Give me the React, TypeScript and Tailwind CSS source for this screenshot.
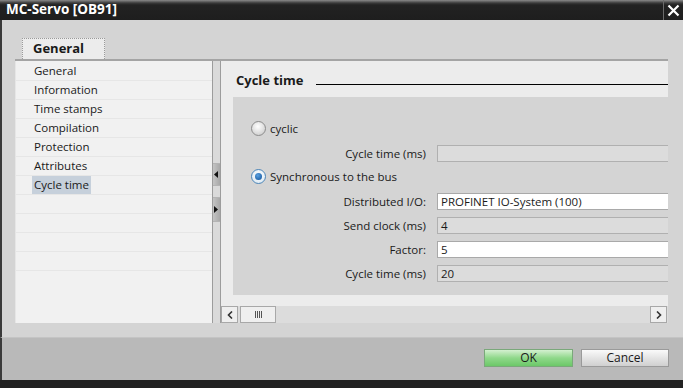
import React from "react";

const navItems = ["General", "Information", "Time stamps", "Compilation", "Protection", "Attributes", "Cycle time"];

function Radio({ checked }: { checked?: boolean }) {
  return (
    <span
      className={
        "flex h-[15px] w-[15px] shrink-0 items-center justify-center rounded-full border " +
        (checked
          ? "border-[#4d86b8] bg-[radial-gradient(circle_at_50%_40%,#ffffff,#d4e4f0)]"
          : "border-[#8c8c8c] bg-[radial-gradient(circle_at_45%_35%,#ffffff,#c4c4c4)]")
      }
    >
      {checked && (
        <span className="h-[7px] w-[7px] rounded-full bg-[radial-gradient(circle_at_40%_35%,#5aa0e0,#0b4f98)]" />
      )}
    </span>
  );
}

function Field({ label, value, editable }: { label: string; value?: string; editable?: boolean }) {
  return (
    <div className="flex h-[17px] items-center leading-[15px]">
      <span className="w-[194px] shrink-0 pr-[1px] text-right">{label}</span>
      <div
        className={
          "ml-[10px] flex h-[17px] flex-1 items-center border border-r-0 pl-[3px] " +
          (editable ? "border-[#a9a9a9] bg-white" : "border-[#b0b0b0] bg-[#dcdcdc]")
        }
      >
        {value}
      </div>
    </div>
  );
}

export default function App() {
  return (
    <div
      className="flex h-[388px] w-[683px] flex-col overflow-hidden bg-[#222] text-[11.5px] text-[#1a1a1a]"
      style={{ fontFamily: '"Open Sans", "Liberation Sans", sans-serif' }}
    >
      {/* title bar */}
      <div className="flex h-[20px] shrink-0 items-center bg-[linear-gradient(#8a8a8a_0px,#3a3a3a_3px,#222_5px,#1e1e1e)]">
        <span className="flex-1 pl-[6px] text-[13.5px] font-bold leading-none text-white">MC-Servo [OB91]</span>
        <div className="flex h-[20px] w-[20px] items-center justify-center border-l border-[#6a6a6a]">
          <svg width="13" height="13" viewBox="0 0 13 13">
            <path d="M1.5 1.5 L11.5 11.5 M11.5 1.5 L1.5 11.5" stroke="#fff" strokeWidth="2.2" />
          </svg>
        </div>
      </div>

      {/* body */}
      <div className="flex h-[317px] shrink-0 flex-col border-l-2 border-[#3a3a3a] bg-[#d4d4d4] pl-[13px] pr-[15px] pt-[18px]">
        {/* tab */}
        <div className="flex">
          <div className="ml-[7px] flex h-[21px] w-[83px] items-center border border-b-0 border-dotted border-[#9a9a9a] bg-[#ececec] pl-[10px] text-[13px] font-bold">
            General
          </div>
        </div>

        {/* tab content */}
        <div className="flex h-[264px] border-t-2 border-[#a4a4a4]">
          {/* nav */}
          <div className="flex w-[197px] flex-col border-l border-[#e6e6e6] bg-[#f1f1f1] pt-[1px]">
            {navItems.map((n) => (
              <div key={n} className="flex h-[19px] shrink-0 items-center border-b border-[#e6e6e6] pl-[16px]">
                <span className={"px-[2px] leading-[18px] " + (n === "Cycle time" ? "bg-[#c6d0db]" : "")}>{n}</span>
              </div>
            ))}
            {[0, 1, 2, 3].map((i) => (
              <div key={i} className="h-[19px] shrink-0 border-b border-[#e6e6e6]" />
            ))}
          </div>

          {/* splitter */}
          <div className="flex w-[9px] flex-col border-x border-[#9c9c9c] bg-[#dadada]">
            <div className="h-[102px]" />
            <div className="flex h-[23px] items-center justify-start border-y border-[#b4b4b4] bg-[linear-gradient(90deg,#c4c4c4,#a8a8a8)]">
              <svg width="4" height="7" viewBox="0 0 4 7" className="ml-[1px]">
                <path d="M4 0 L0 3.5 L4 7 Z" fill="#111" />
              </svg>
            </div>
            <div className="h-[11px]" />
            <div className="flex h-[25px] items-center border-y border-[#b4b4b4] bg-[linear-gradient(90deg,#c4c4c4,#a8a8a8)]">
              <svg width="4" height="7" viewBox="0 0 4 7" className="ml-[1px]">
                <path d="M0 0 L4 3.5 L0 7 Z" fill="#111" />
              </svg>
            </div>
          </div>

          {/* right panel */}
          <div className="flex flex-1 flex-col overflow-hidden bg-[#ececec]">
            <div className="flex h-[36px] shrink-0 items-center pl-[15px] pt-[4px]">
              <span className="text-[13px] font-bold">Cycle time</span>
              <div className="ml-[13px] mt-[6px] h-[1px] flex-1 bg-black" />
            </div>

            <div className="ml-[12px] flex h-[198px] flex-col bg-[#d4d4d4] pt-[24px]">
              <div className="flex h-[15px] items-center pl-[18px] leading-[15px]">
                <Radio />
                <span className="ml-[4px]">cyclic</span>
              </div>
              <div className="mt-[9px]">
                <Field label="Cycle time (ms)" />
              </div>
              <div className="mt-[7px] flex h-[15px] items-center pl-[18px] leading-[15px]">
                <Radio checked />
                <span className="ml-[4px]">Synchronous to the bus</span>
              </div>
              <div className="mt-[9px] flex flex-col gap-[7px]">
                <Field label="Distributed I/O:" value="PROFINET IO-System (100)" editable />
                <Field label="Send clock (ms)" value="4" />
                <Field label="Factor:" value="5" editable />
                <Field label="Cycle time (ms)" value="20" />
              </div>
            </div>

            <div className="h-[11px] shrink-0" />

            {/* horizontal scrollbar */}
            <div className="flex h-[17px] shrink-0 items-center bg-[#dcdcdc]">
              <div className="flex h-[17px] w-[17px] items-center justify-center border border-[#a8a8a8] bg-[#efefef]">
                <svg width="6" height="8" viewBox="0 0 6 8">
                  <path d="M5 0.5 L1.5 4 L5 7.5" stroke="#333" strokeWidth="1.6" fill="none" />
                </svg>
              </div>
              <div className="ml-[2px] flex h-[17px] w-[36px] items-center justify-center gap-[1px] border border-[#a8a8a8] bg-[#efefef]">
                {[0, 1, 2, 3].map((i) => (
                  <span key={i} className="h-[7px] w-[1px] bg-[#555]" />
                ))}
              </div>
              <div className="flex-1" />
              <div className="mr-[1px] flex h-[17px] w-[17px] items-center justify-center border border-[#a8a8a8] bg-[#efefef]">
                <svg width="6" height="8" viewBox="0 0 6 8">
                  <path d="M1 0.5 L4.5 4 L1 7.5" stroke="#333" strokeWidth="1.6" fill="none" />
                </svg>
              </div>
            </div>
          </div>
        </div>
      </div>

      {/* footer */}
      <div className="flex h-[43px] shrink-0 items-start justify-end gap-[8px] border-l-2 border-t border-[#3a3a3a] border-t-[#c4c4c4] bg-[#b9b9b9] pr-[14px] pt-[11px]">
        <button className="flex h-[18px] w-[89px] items-center justify-center border border-[#7aa87a] bg-[linear-gradient(#d4f0d0,#8fd88a_50%,#6cc868)] text-[12px] leading-none">
          OK
        </button>
        <button className="flex h-[18px] w-[88px] items-center justify-center border border-[#9a9a9a] bg-[linear-gradient(#fafafa,#e4e4e4_50%,#d0d0d0)] text-[12px] leading-none">
          Cancel
        </button>
      </div>
      <div className="h-[8px] shrink-0 bg-[#222]" />
    </div>
  );
}
